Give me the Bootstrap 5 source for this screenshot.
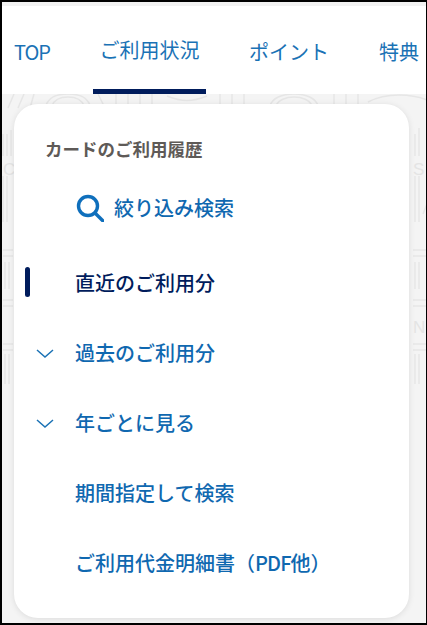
<!DOCTYPE html>
<html lang="ja">
<head>
<meta charset="utf-8">
<title>カードのご利用履歴</title>
<link href="https://cdn.jsdelivr.net/npm/bootstrap@5.3.0/dist/css/bootstrap.min.css" rel="stylesheet">
<style>
html,body{height:100%;margin:0;overflow:hidden}
body{font-family:"Noto Sans CJK JP","Noto Sans",sans-serif;background:#fff}
.frame{width:427px;height:625px;border:solid #000;border-width:2px 1px 2px 2px;overflow:hidden;background:#f4f4f4}
.hair{height:4px;background:#f2f2f2}
.tabbar{height:88px;background:#fff;margin:0;padding:0;flex-wrap:nowrap;padding-left:11px;align-items:stretch}
.tabbar a{display:flex;align-items:center;height:88px;padding-top:4px;color:#1a72b5;font-size:20px;font-weight:400;line-height:1;text-decoration:none;white-space:nowrap;justify-content:center}
.tab-a{width:38px;letter-spacing:-.9px;margin-right:42px}
.tab-b{width:113px;border-bottom:5px solid #001c5c;margin-right:42px}
.tab-c{width:82px;margin-right:49px}
.tab-d{width:40px}
.stage{height:529px;padding:10px 17px 0 12px}
.deco{top:0;left:0;pointer-events:none}
.deco text{font-family:"Liberation Sans",sans-serif;font-size:17px;fill:#e4e4e4;stroke:none}
.menu-card{z-index:1;height:514px;border-radius:24px;background:#fff;box-shadow:0 1px 6px rgba(0,0,0,.10);border:0;padding-top:32px}
.menu-title{font-size:17.5px;font-weight:700;line-height:26px;color:#5e5a57;margin:0 0 0 31px}
.menu-list{list-style:none;margin:6px 0 0;padding:0}
.menu-row{height:70px;display:flex;align-items:center;font-size:20px;font-weight:500;color:#0f68b0;position:relative;padding-left:61px;white-space:nowrap}
.menu-row.current{color:#001c5c}
.first{height:80px;padding-left:62px}
.first svg{margin-right:10px;flex:none}
.marker{position:absolute;left:11px;top:19px;width:5px;height:30px;border-radius:3px;background:#001c5c}
.chev{position:absolute;left:22px;top:31px}
.tight{letter-spacing:-.9px}
</style>
</head>
<body>
<div class="frame d-flex flex-column">
  <div class="hair"></div>
  <nav class="tabbar nav">
    <a class="tab-a" href="#">TOP</a>
    <a class="tab-b" href="#">ご利用状況</a>
    <a class="tab-c" href="#">ポイント</a>
    <a class="tab-d" href="#">特典</a>
  </nav>
  <div class="stage position-relative">
    <svg class="deco position-absolute" width="425" height="529" viewBox="0 0 425 529" fill="none" stroke="#e6e6e6" stroke-width="1.5">
      <path d="M6 14L12 0M16 14L22 0M28 14L32 0M44 12C46 4 54 0 66 0M50 12C52 6 58 3 66 3M88 12C86 4 78 0 66 0M82 12C80 6 74 3 66 3"/>
      <path d="M102 12L96 0M114 10V0M126 10V0M138 10V0M150 10V0M165 2C180 8 190 8 205 2M218 10V0M230 10V0M242 10V0"/>
      <path d="M268 12C270 4 280 0 292 0M274 12C276 6 284 3 292 3M316 12C314 4 304 0 292 0M310 12C308 6 300 3 292 3M332 10V0M344 10V0M356 10V0M366 8C385 -2 410 0 425 6"/>
      <path d="M413 40V62M417 34V62M413 82V128M417 82V128M421 120L425 110M411 156H425M411 162H425M413 168V195M417 168V195M411 206H425M411 212H425M411 250H425M411 256H425M413 260V290M417 260V290"/>
      <path d="M1 40V62M5 40V62M9 36V62M1 82V128M5 82V128M1 156H11M1 162H11M3 168V195M7 168V195M1 206H11M1 212H11M1 250H11M1 256H11M3 260V290M7 260V290"/>
      <text x="411" y="81">S</text>
      <text x="411" y="239">N</text>
      <text x="1" y="81">C</text>
    </svg>
    <div class="card menu-card position-relative">
      <p class="menu-title">カードのご利用履歴</p>
      <ul class="menu-list">
        <li class="menu-row first">
          <svg width="28" height="28" viewBox="0 0 28 28" fill="none" stroke="#0f6fbc" stroke-width="3.4"><circle cx="12" cy="12" r="9.5"/><path d="M19 19l8 8" stroke-linecap="round"/></svg>
          絞り込み検索
        </li>
        <li class="menu-row current"><span class="marker"></span>直近のご利用分</li>
        <li class="menu-row"><svg class="chev" width="18" height="10" viewBox="0 0 18 10" fill="none" stroke="#1a72b5" stroke-width="1.5"><path d="M1 1l8 7 8-7"/></svg>過去のご利用分</li>
        <li class="menu-row"><svg class="chev" width="18" height="10" viewBox="0 0 18 10" fill="none" stroke="#1a72b5" stroke-width="1.5"><path d="M1 1l8 7 8-7"/></svg>年ごとに見る</li>
        <li class="menu-row">期間指定して検索</li>
        <li class="menu-row"><span>ご利用代金明細書（<span class="tight">PDF</span>他）</span></li>
      </ul>
    </div>
  </div>
</div>
<script src="https://cdn.jsdelivr.net/npm/bootstrap@5.3.0/dist/js/bootstrap.bundle.min.js"></script>
</body>
</html>
